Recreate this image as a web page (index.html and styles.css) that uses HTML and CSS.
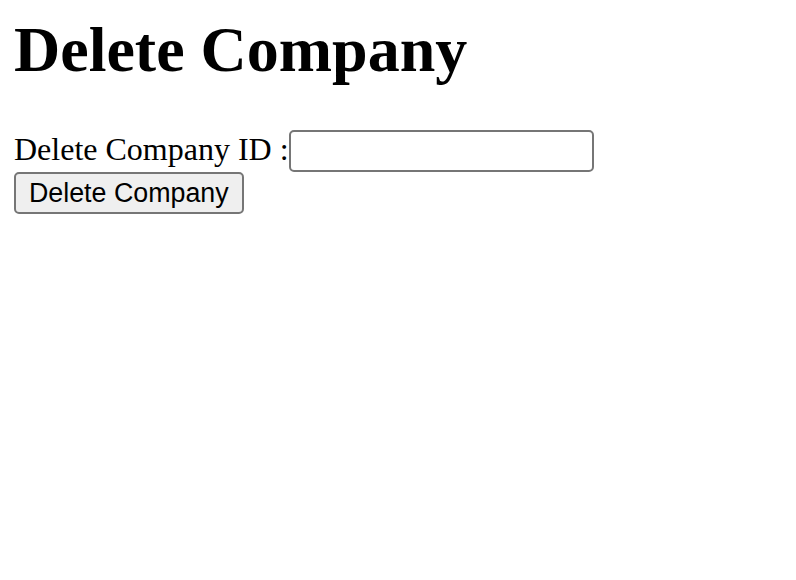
FILE: index.html
```html
<!DOCTYPE html>
<html>
<head>
<meta charset="utf-8">
<link rel="stylesheet" href="styles.css">
</head>
<body class="page">
<h1 class="title">Delete Company</h1>
<form class="form">
<label class="label" for="cid">Delete Company ID :</label><input class="field" id="cid" type="text"><br>
<button class="btn" type="button">Delete Company</button>
</form>
</body>
</html>
```
FILE: styles.css
```css
html, body {
  margin: 0;
  padding: 0;
  background: #fff;
}
.page {
  padding: 13px 14px 0 14px;
  font-family: "Liberation Serif", "Times New Roman", serif;
  font-size: 32px;
  color: #000;
}
.title {
  font-size: 64px;
  font-weight: bold;
  margin: 0 0 43px 0;
  line-height: 74px;
}
.form {
  margin: 0;
}
.label {
  font-size: 32px;
}
.field {
  box-sizing: border-box;
  width: 305px;
  height: 42px;
  font-family: "Liberation Sans", Arial, sans-serif;
  font-size: 26.67px;
  padding: 2px 4px;
  border: 2px solid #767676;
  border-radius: 5px;
  background: #fff;
  margin: 0;
  vertical-align: baseline;
}
.btn {
  box-sizing: border-box;
  height: 42px;
  font-family: "Liberation Sans", Arial, sans-serif;
  font-size: 26.8px;
  padding: 2px 13px;
  border: 2px solid #767676;
  border-radius: 5px;
  background: #efefef;
  color: #000;
  margin: 0;
}
```
